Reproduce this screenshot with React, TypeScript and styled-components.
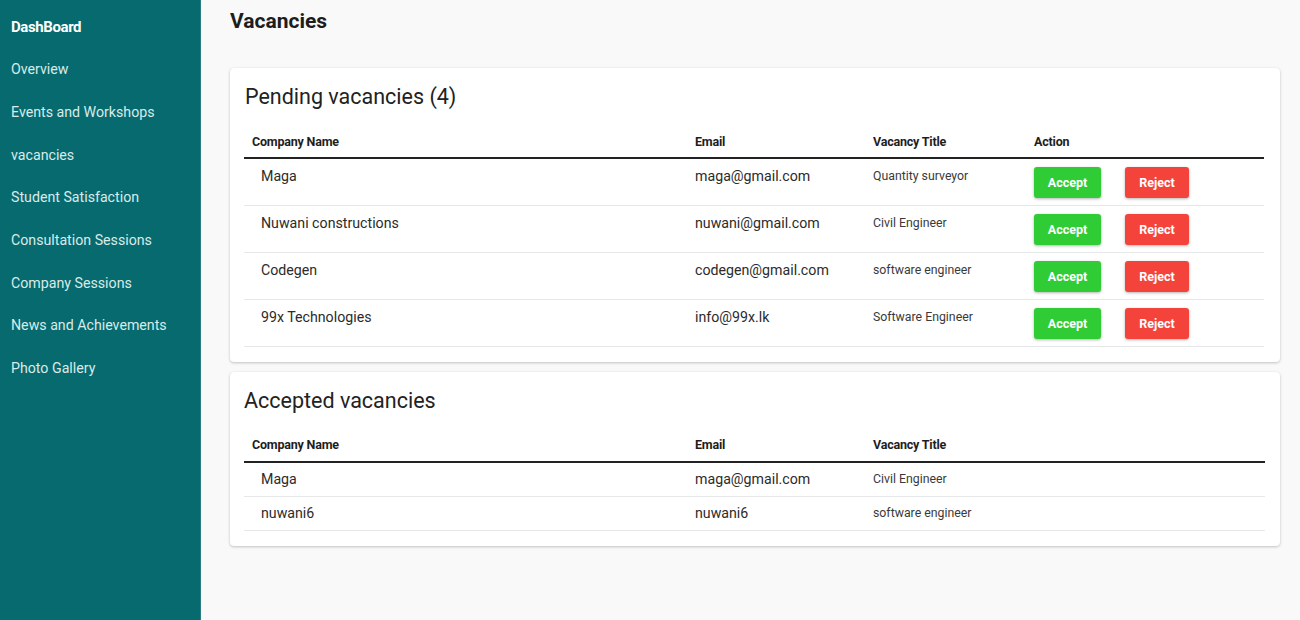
import React from "react";
import styled, { createGlobalStyle } from "styled-components";

const Global = createGlobalStyle`
  html, body { margin: 0; padding: 0; }
  body {
    font-family: Roboto, "Liberation Sans", Arial, sans-serif;
    background: #f9f9f9;
  }
  * { box-sizing: border-box; }
`;

const Layout = styled.div`
  display: flex;
  width: 1300px;
  height: 620px;
  overflow: hidden;
`;

const Sidebar = styled.nav`
  width: 201px;
  flex: none;
  background: #066a6e;
  border-right: 1px solid #2a7e82;
  padding: 16.5px 0 0 11px;
  display: flex;
  flex-direction: column;
  gap: 22.7px;
`;

const NavItem = styled.a<{ $brand?: boolean }>`
  display: block;
  font-size: ${(p) => (p.$brand ? "15px" : "14.2px")};
  font-weight: ${(p) => (p.$brand ? 700 : 400)};
  color: ${(p) => (p.$brand ? "#ffffff" : "#d9eaea")};
  line-height: 20px;
  text-decoration: none;
  letter-spacing: ${(p) => (p.$brand ? "-0.4px" : "0")};
`;

const Main = styled.main`
  flex: 1;
  padding: 8px 20px 0 29px;
  display: flex;
  flex-direction: column;
`;

const PageTitle = styled.h1`
  margin: 0 0 34px;
  font-size: 21px;
  line-height: 26px;
  font-weight: 700;
  color: #1d1d1d;
`;

const Card = styled.section<{ $tight?: boolean }>`
  background: #fff;
  border-radius: 4px;
  box-shadow: 0 1px 3px rgba(0, 0, 0, 0.22), 0 0 1px rgba(0, 0, 0, 0.08);
  padding: 14px 15px ${(p) => (p.$tight ? "15px 14px" : "15px 15px")};
  margin-bottom: 10px;
`;

const CardTitle = styled.h2`
  margin: 0;
  font-size: 21.5px;
  line-height: 30px;
  font-weight: 400;
  color: #222;
`;

const Table = styled.table<{ $compact?: boolean }>`
  width: 100%;
  border-collapse: collapse;
  table-layout: fixed;
  margin-left: ${(p) => (p.$compact ? "0" : "-1px")};

  th {
    padding-top: ${(p) => (p.$compact ? "21px" : "22px")};
    padding-bottom: ${(p) => (p.$compact ? "8px" : "7px")};
  }
  td.text {
    padding-top: ${(p) => (p.$compact ? "6px" : "7px")};
    padding-bottom: ${(p) => (p.$compact ? "7px" : "6px")};
  }
`;

const Th = styled.th`
  text-align: left;
  font-size: 12.5px;
  font-weight: 700;
  color: #1e1e1e;
  line-height: 16px;
  padding: 22px 8px 7px 8px;
  border-bottom: 2px solid #222;
  letter-spacing: -0.2px;
`;

const Td = styled.td.attrs({ className: "text" })<{ $indent?: boolean; $small?: boolean }>`
  vertical-align: top;
  font-size: ${(p) => (p.$small ? "12.3px" : "14.2px")};
  color: ${(p) => (p.$small ? "#3a3a3a" : "#2b2b2b")};
  line-height: 20px;
  padding: 7px 8px 6px ${(p) => (p.$indent ? "17px" : "8px")};
  border-bottom: 1px solid #e6e8ea;
`;

const ActionCell = styled.td`
  vertical-align: top;
  padding: 8px 8px 7px 8px;
  border-bottom: 1px solid #e6e8ea;
`;

const Actions = styled.div`
  display: flex;
  gap: 24px;
`;

const Btn = styled.button<{ $tone: "accept" | "reject" }>`
  height: 31px;
  width: ${(p) => (p.$tone === "accept" ? "67px" : "64px")};
  border: none;
  border-radius: 3px;
  background: ${(p) => (p.$tone === "accept" ? "#30cc36" : "#f4433a")};
  color: #fff;
  font-family: Roboto, "Liberation Sans", Arial, sans-serif;
  font-size: 12.5px;
  font-weight: 700;
  box-shadow: 0 1px 3px rgba(0, 0, 0, 0.3);
  padding: 0;
  cursor: pointer;
`;

const nav = [
  "Overview",
  "Events and Workshops",
  "vacancies",
  "Student Satisfaction",
  "Consultation Sessions",
  "Company Sessions",
  "News and Achievements",
  "Photo Gallery",
];

const pending = [
  { name: "Maga", email: "maga@gmail.com", title: "Quantity surveyor" },
  { name: "Nuwani constructions", email: "nuwani@gmail.com", title: "Civil Engineer" },
  { name: "Codegen", email: "codegen@gmail.com", title: "software engineer" },
  { name: "99x Technologies", email: "info@99x.lk", title: "Software Engineer" },
];

const accepted = [
  { name: "Maga", email: "maga@gmail.com", title: "Civil Engineer" },
  { name: "nuwani6", email: "nuwani6", title: "software engineer" },
];

const Cols = () => (
  <colgroup>
    <col style={{ width: 443 }} />
    <col style={{ width: 178 }} />
    <col style={{ width: 161 }} />
    <col />
  </colgroup>
);

export default function App() {
  return (
    <>
      <Global />
      <Layout>
        <Sidebar>
          <NavItem $brand>DashBoard</NavItem>
          {nav.map((n) => (
            <NavItem key={n}>{n}</NavItem>
          ))}
        </Sidebar>
        <Main>
          <PageTitle>Vacancies</PageTitle>
          <Card>
            <CardTitle>Pending vacancies (4)</CardTitle>
            <Table>
              <Cols />
              <thead>
                <tr>
                  <Th>Company Name</Th>
                  <Th>Email</Th>
                  <Th>Vacancy Title</Th>
                  <Th>Action</Th>
                </tr>
              </thead>
              <tbody>
                {pending.map((r) => (
                  <tr key={r.email}>
                    <Td $indent>{r.name}</Td>
                    <Td>{r.email}</Td>
                    <Td $small>{r.title}</Td>
                    <ActionCell>
                      <Actions>
                        <Btn $tone="accept">Accept</Btn>
                        <Btn $tone="reject">Reject</Btn>
                      </Actions>
                    </ActionCell>
                  </tr>
                ))}
              </tbody>
            </Table>
          </Card>
          <Card $tight>
            <CardTitle>Accepted vacancies</CardTitle>
            <Table $compact>
              <Cols />
              <thead>
                <tr>
                  <Th>Company Name</Th>
                  <Th>Email</Th>
                  <Th>Vacancy Title</Th>
                  <Th />
                </tr>
              </thead>
              <tbody>
                {accepted.map((r) => (
                  <tr key={r.email}>
                    <Td $indent>{r.name}</Td>
                    <Td>{r.email}</Td>
                    <Td $small>{r.title}</Td>
                    <Td />
                  </tr>
                ))}
              </tbody>
            </Table>
          </Card>
        </Main>
      </Layout>
    </>
  );
}
